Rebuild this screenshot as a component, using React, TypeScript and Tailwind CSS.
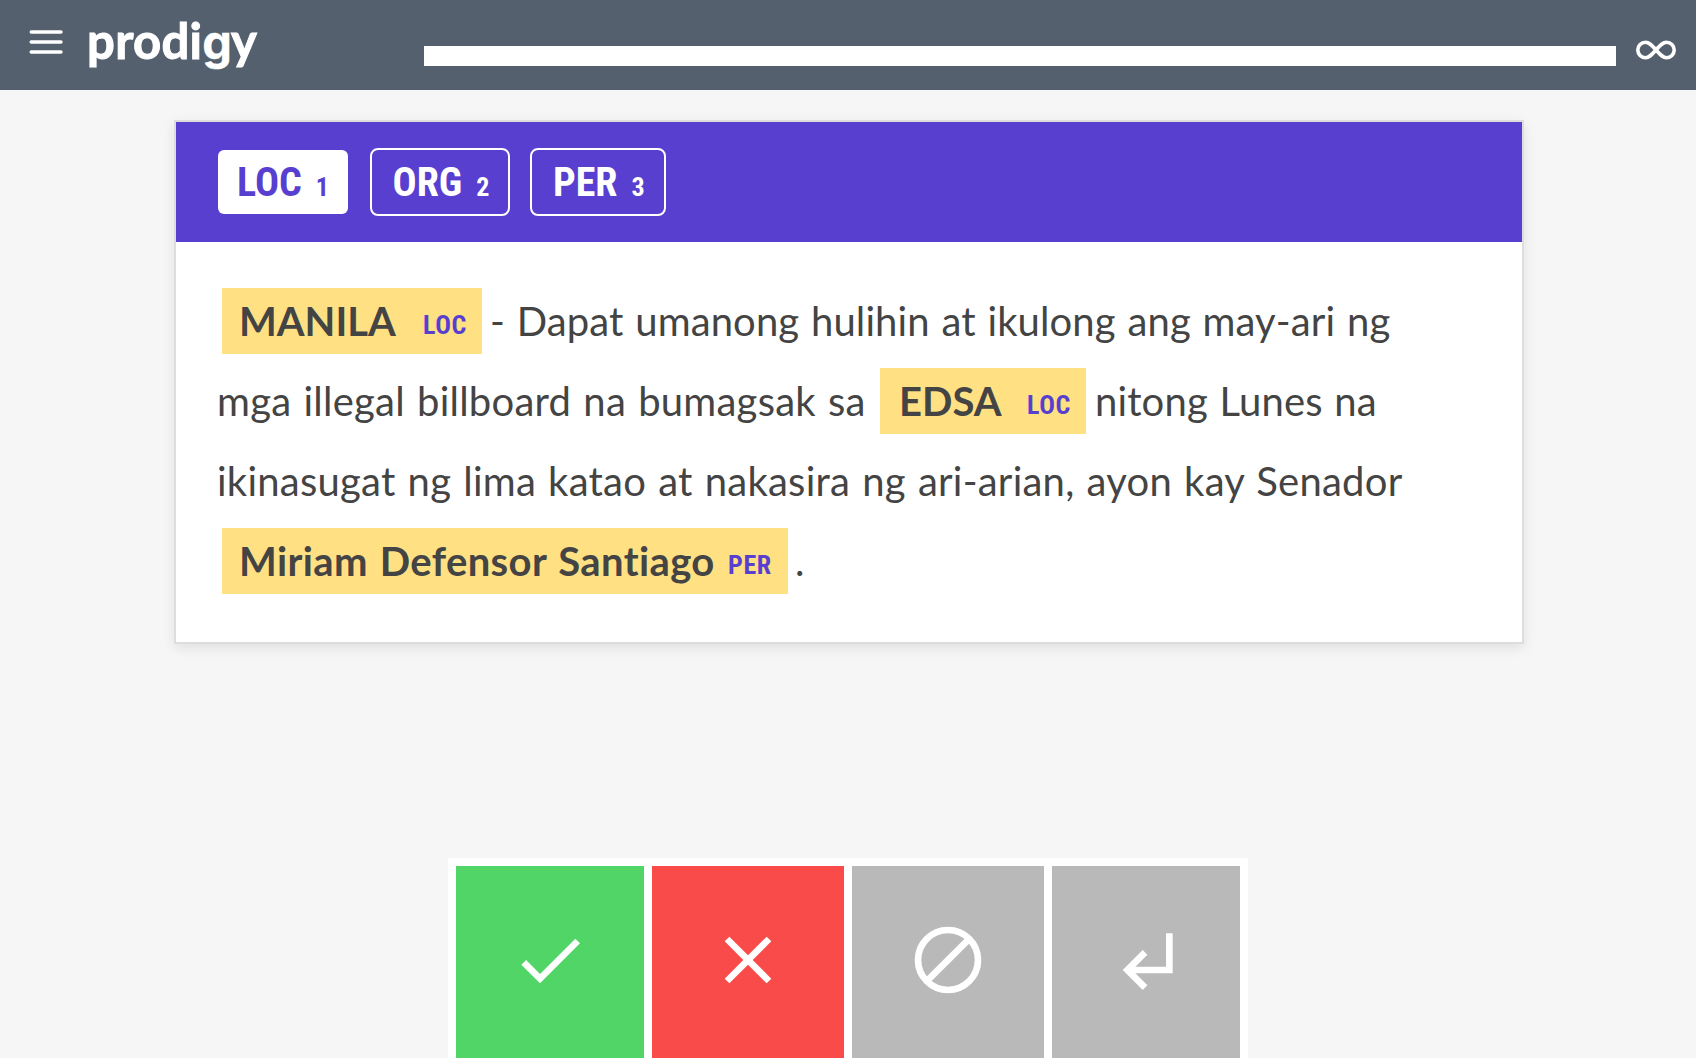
import React from "react";

type TagProps = { name: string; hotkey: string; className: string };

function Tag({ name, hotkey, className }: TagProps) {
  return (
    <button className={`flex items-baseline whitespace-nowrap font-['Roboto_Condensed',Roboto,sans-serif] [font-stretch:75%] text-[40px] font-bold ${className}`}>
      <span>{name}</span>
      <span className="ml-[14px] text-[26px]">{hotkey}</span>
    </button>
  );
}

type EntityProps = { text: string; label: string; box: string; textClass: string };

function Entity({ text, label, box, textClass }: EntityProps) {
  return (
    <mark className={`flex h-[66px] shrink-0 items-baseline bg-[#ffe083] leading-[66px] font-bold text-[#444] ${box}`}>
      <span className={`shrink-0 ${textClass}`}>{text}</span>
      <span className="relative top-[-2px] font-['Roboto_Condensed',Roboto,sans-serif] [font-stretch:75%] text-[26px] tracking-[0.6px] text-[#583fcf]">{label}</span>
    </mark>
  );
}

function ActionIcon({ children }: { children: React.ReactNode }) {
  return (
    <svg viewBox="0 0 24 24" className="size-20" fill="white">
      {children}
    </svg>
  );
}

export default function App() {
  return (
    <div className="flex h-[1058px] w-[1696px] flex-col overflow-hidden bg-[#f6f6f6] font-[Lato,sans-serif]">
      <header className="flex h-[90px] shrink-0 bg-[#55606e]">
        <svg viewBox="0 0 36 26" className="mt-[29px] ml-[28px] h-[26px] w-[36px]" stroke="white" strokeWidth="3.4" strokeLinecap="round">
          <path d="M3.2 3H33M3.2 13H33M3.2 23H33" />
        </svg>
        <div className="ml-[23px] w-[337px] pt-[13px] text-[49px] leading-[54px] font-bold whitespace-nowrap text-white [-webkit-text-stroke:1px_white]">
          <span className="tracking-[0.3px]">prodi</span>
          <span className="font-[Inter,sans-serif] text-[47px] tracking-[-1px] [-webkit-text-stroke:0.3px_white]">g</span>
          <span>y</span>
        </div>
        <div className="mt-[46px] h-5 w-[1192px] bg-white" />
        <svg viewBox="0 0 40 20" className="mt-10 ml-5 h-5 w-10" fill="none" stroke="white" strokeWidth="3.6">
          <path d="M20 10C15.5 5 13 2.3 9.5 2.3A7.7 7.7 0 0 0 9.5 17.7C13 17.7 15.5 15 20 10C24.500 5 27 2.300 30.500 2.300A7.700 7.700 0 0 1 30.500 17.700C27 17.700 24.500 15 20 10Z" />
        </svg>
      </header>

      <main className="mt-[30px] ml-[174px] h-[524px] w-[1350px] shrink-0 border-2 border-[#ddd] bg-white shadow-[0_4px_12px_rgba(0,0,0,0.09)]">
        <div className="flex h-[120px] items-center bg-[#583fcf] pl-[42px]">
          <Tag name="LOC" hotkey="1" className="h-16 w-[130px] rounded-md bg-white pt-px pl-[19px] leading-[64px] text-[#583fcf]" />
          <Tag name="ORG" hotkey="2" className="ml-[22px] h-[68px] w-[140px] rounded-lg border-2 border-white pt-px pl-[20.5px] leading-[64px] text-white" />
          <Tag name="PER" hotkey="3" className="ml-5 h-[68px] w-[136px] rounded-lg border-2 border-white pt-px pl-[21px] leading-[64px] text-white" />
        </div>
        <div className="pt-[39px] pl-[42px] text-[40px] whitespace-nowrap text-[#444]">
          <div className="flex h-20 items-center">
            <Entity text="MANILA" label="LOC" box="ml-1 w-[260px] pl-[17px]" textClass="w-[184px]" />
            <span className="ml-2 tracking-[0.1px] [word-spacing:1.5px]">- Dapat umanong hulihin at ikulong ang may-ari ng</span>
          </div>
          <div className="flex h-20 items-center">
            <span className="-ml-px w-[663px] tracking-[0.25px] [word-spacing:1.6px]">mga illegal billboard na bumagsak sa</span>
            <Entity text="EDSA" label="LOC" box="w-[206px] pl-[19px]" textClass="w-[128px]" />
            <span className="ml-[9px] tracking-[0.15px] [word-spacing:1.2px]">nitong Lunes na</span>
          </div>
          <div className="-ml-px flex h-20 items-center tracking-[0.24px] [word-spacing:1.6px]">ikinasugat ng lima katao at nakasira ng ari-arian, ayon kay Senador</div>
          <div className="flex h-20 items-center">
            <Entity text="Miriam Defensor Santiago" label="PER" box="ml-1 w-[566px] pl-[17px]" textClass="w-[489px] tracking-[0.4px] [word-spacing:1.6px]" />
            <span className="ml-[7px]">.</span>
          </div>
        </div>
      </main>

      <footer className="mt-[214px] ml-[448px] flex h-[200px] w-[800px] shrink-0 gap-2 bg-white px-2 pt-2">
        <button className="flex h-[192px] w-[188px] justify-center bg-[#50d566] pt-[54px]">
          <ActionIcon><path d="M9 16.17L4.83 12l-1.42 1.41L9 19 21 7l-1.41-1.41z" /></ActionIcon>
        </button>
        <button className="flex h-[192px] w-[192px] justify-center bg-[#f94c4a] pt-[54px]">
          <ActionIcon><path d="M19 6.41L17.59 5 12 10.59 6.41 5 5 6.41 10.59 12 5 17.59 6.41 19 12 13.41 17.59 19 19 17.59 13.41 12z" /></ActionIcon>
        </button>
        <button className="flex h-[192px] w-[192px] justify-center bg-[#b9b9b9] pt-[54px]">
          <ActionIcon><path d="M5.640 18.360L18.360 5.640" stroke="white" strokeWidth="2" /><circle cx="12" cy="12" r="9" fill="none" stroke="white" strokeWidth="2" /></ActionIcon>
        </button>
        <button className="flex h-[192px] w-[188px] justify-center bg-[#b9b9b9] pt-[54px]">
          <ActionIcon><path d="M11 9l1.42 1.42L8.83 14H18V4h2v12H8.83l3.590 3.580L11 21l-6-6 6-6z" /></ActionIcon>
        </button>
      </footer>
    </div>
  );
}
